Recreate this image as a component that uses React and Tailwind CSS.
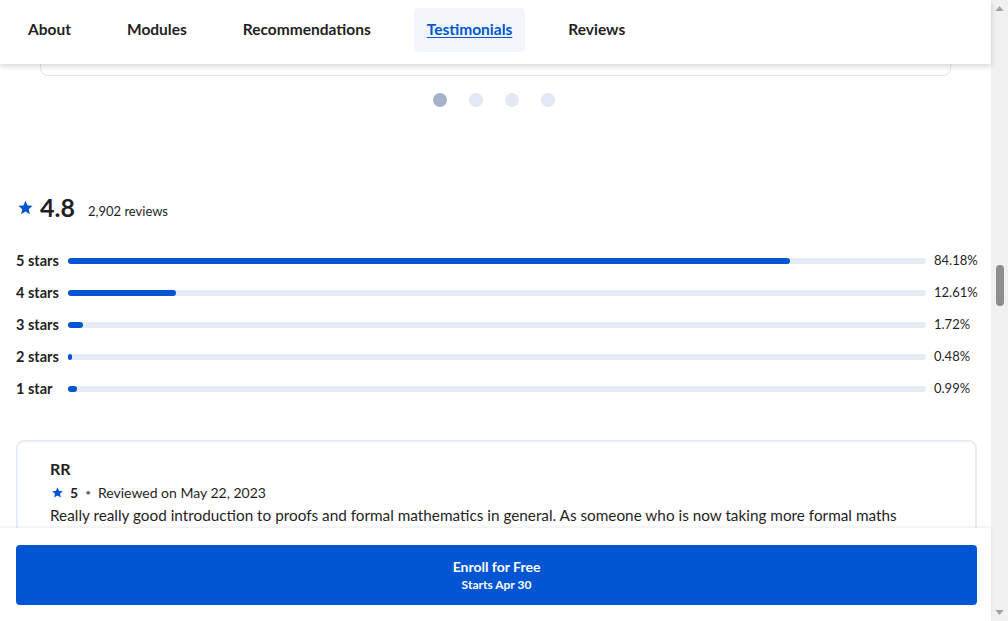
const navItems = ['About', 'Modules', 'Recommendations', 'Testimonials', 'Reviews']

const ratings = [
  { label: '5 stars', pct: 84.18 },
  { label: '4 stars', pct: 12.61 },
  { label: '3 stars', pct: 1.72 },
  { label: '2 stars', pct: 0.48 },
  { label: '1 star', pct: 0.99 },
]

function StarIcon({ className }) {
  return (
    <svg viewBox="0 0 24 24" className={className} fill="currentColor">
      <path d="M12 2.5l2.9 6.6 7.1.6-5.4 4.7 1.6 7-6.2-3.8-6.2 3.8 1.6-7L2 9.7l7.1-.6z" />
    </svg>
  )
}

export default function App() {
  return (
    <div className="flex h-[621px] w-[1008px] overflow-hidden bg-white text-[#1f1f1f]" style={{ fontFamily: 'Lato, "Noto Sans", sans-serif' }}>
      <div className="flex w-[991px] flex-col">
        <header className="relative z-10 flex h-16 shrink-0 items-start gap-[30px] bg-white pl-[15px] pt-2 shadow-[0_2px_6px_rgba(0,0,0,0.18)]">
          {navItems.map((item) => (
            <a
              key={item}
              className={
                item === 'Testimonials'
                  ? 'flex h-11 items-center rounded bg-[#f2f5fa] px-[13px] text-[15.5px] font-bold text-[#0056d2] underline underline-offset-2'
                  : 'flex h-11 items-center px-[13px] text-[15.5px] font-bold'
              }
            >
              {item}
            </a>
          ))}
        </header>

        <div className="relative min-h-0 flex-1 overflow-hidden">
          <div className="mx-10 h-[12px] rounded-b-lg border-x border-b border-[#dfe5ef]" />

          <div className="mt-[17px] flex justify-center gap-[22px] pr-[3px]">
            <span className="size-[14px] rounded-full bg-[#a6b2c8]" />
            <span className="size-[14px] rounded-full bg-[#e3e9f4]" />
            <span className="size-[14px] rounded-full bg-[#e3e9f4]" />
            <span className="size-[14px] rounded-full bg-[#e3e9f4]" />
          </div>

          <div className="mt-[84px] flex items-center px-4">
            <StarIcon className="ml-[1px] size-[17px] text-[#0056d2]" />
            <span className="ml-[6px] text-[25px] font-bold leading-8">4.8</span>
            <span className="ml-[13px] mt-[10px] text-[13px]">2,902 reviews</span>
          </div>

          <div className="mt-[22px] px-4">
            {ratings.map((r) => (
              <div key={r.label} className="grid h-8 grid-cols-[52px_1fr_49px] items-center">
                <span className="text-[14.5px] font-bold">{r.label}</span>
                <div className="h-[6px] rounded-full bg-[#e5ebf5]">
                  <div
                    className="h-[6px] rounded-full bg-[#0056d2]"
                    style={{ width: `max(${r.pct}%, ${r.pct < 1 ? (r.pct < 0.6 ? 4 : 9) : 15}px)` }}
                  />
                </div>
                <span className="pl-2 text-[13px]">{r.pct.toFixed(2)}%</span>
              </div>
            ))}
          </div>

          <div className="ml-4 mr-[14px] mt-[35px] rounded-lg border-2 border-[#e8edf5] px-[32px] pt-[15px] pb-8">
            <div className="text-[16px] font-bold leading-6">RR</div>
            <div className="flex h-[22px] items-center text-[14px]">
              <StarIcon className="ml-[1px] size-[13px] text-[#0056d2]" />
              <span className="ml-[6px] font-bold">5</span>
              <span className="mx-[7px] text-[10px] text-[#5b6780]">•</span>
              <span>Reviewed on May 22, 2023</span>
            </div>
            <p className="text-[15.3px] leading-6">
              Really really good introduction to proofs and formal mathematics in general. As someone who is now taking more formal maths courses at university, I found this course extremely helpful.
            </p>
          </div>
        </div>

        <div className="relative z-10 h-[93px] shrink-0 bg-white px-4 pt-[17px] shadow-[0_-1px_3px_rgba(0,0,0,0.08)]">
          <button className="flex h-[60px] w-[961px] flex-col items-center justify-center rounded bg-[#0056d2] text-white">
            <span className="text-[14px] font-bold leading-5">Enroll for Free</span>
            <span className="text-[12px] font-bold leading-4">Starts Apr 30</span>
          </button>
        </div>
      </div>

      <div className="flex w-[17px] flex-col items-center bg-[#f1f1f1]">
        <svg viewBox="0 0 10 6" className="mt-[6px] h-[5px] w-[9px] fill-[#a3a3a3]"><path d="M5 0l5 6H0z" /></svg>
        <div className="mt-[254px] h-[41px] w-[8px] rounded-full bg-[#8d8d8d]" />
        <div className="flex-1" />
        <svg viewBox="0 0 10 6" className="mb-[6px] h-[5px] w-[9px] fill-[#a3a3a3]"><path d="M0 0h10L5 6z" /></svg>
      </div>
    </div>
  )
}
